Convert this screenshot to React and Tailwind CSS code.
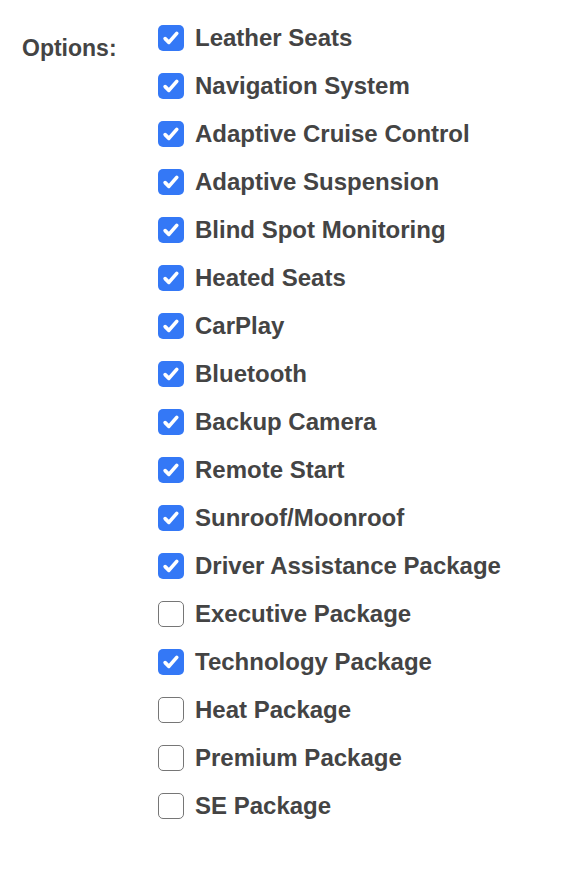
import React, { useState } from 'react';

const OPTIONS = [
  ['Leather Seats', true],
  ['Navigation System', true],
  ['Adaptive Cruise Control', true],
  ['Adaptive Suspension', true],
  ['Blind Spot Monitoring', true],
  ['Heated Seats', true],
  ['CarPlay', true],
  ['Bluetooth', true],
  ['Backup Camera', true],
  ['Remote Start', true],
  ['Sunroof/Moonroof', true],
  ['Driver Assistance Package', true],
  ['Executive Package', false],
  ['Technology Package', true],
  ['Heat Package', false],
  ['Premium Package', false],
  ['SE Package', false],
];

function Box({ checked }) {
  if (checked) {
    return (
      <span className="flex h-[26px] w-[26px] shrink-0 items-center justify-center rounded-[5px] bg-[#3478f6]">
        <svg width="20" height="20" viewBox="0 0 16 16" fill="none">
          <path d="M3.3 8.5l3 3 6.3-7.2" stroke="white" strokeWidth="2.9" strokeLinecap="round" strokeLinejoin="round" />
        </svg>
      </span>
    );
  }
  return <span className="h-[26px] w-[26px] shrink-0 rounded-[5px] border-[1.5px] border-[#767676] bg-white" />;
}

export default function App() {
  const [opts, setOpts] = useState(OPTIONS);

  const toggle = (i) => {
    setOpts(opts.map((o, j) => (j === i ? [o[0], !o[1]] : o)));
  };

  return (
    <div className="min-h-[872px] bg-white pl-[22px] pt-[14px]" style={{ fontFamily: '"Liberation Sans", Arial, sans-serif' }}>
      <div className="flex">
        <div className="w-[136px] pt-[21px] text-[23px] font-bold leading-[26px] text-[#444]">Options:</div>
        <div className="flex flex-col">
          {opts.map(([label, checked], i) => (
            <label key={label} className="flex h-[48px] cursor-pointer items-center gap-[11px]" onClick={() => toggle(i)}>
              <Box checked={checked} />
              <span className="text-[24px] font-bold leading-none text-[#444]">{label}</span>
            </label>
          ))}
        </div>
      </div>
    </div>
  );
}
